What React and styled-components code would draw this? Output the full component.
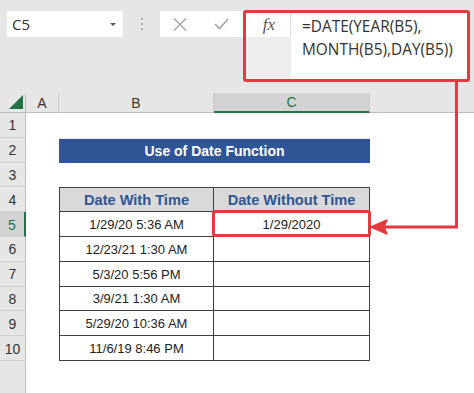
import styled, { createGlobalStyle } from "styled-components";

const GlobalStyle = createGlobalStyle`
  html, body {
    margin: 0;
    padding: 0;
    background: #e6e6e6;
  }
`;

const RED = "#e23b3f";
const GREEN = "#217346";
const BLUE = "#2f5597";

const rows = [
  { n: 1 },
  { n: 2, title: "Use of Date Function" },
  { n: 3 },
  { n: 4, head: ["Date With Time", "Date Without Time"] },
  { n: 5, data: ["1/29/20 5:36 AM", "1/29/2020"], active: true },
  { n: 6, data: ["12/23/21 1:30 AM", ""] },
  { n: 7, data: ["5/3/20 5:56 PM", ""] },
  { n: 8, data: ["3/9/21 1:30 AM", ""] },
  { n: 9, data: ["5/29/20 10:36 AM", ""] },
  { n: 10, data: ["11/6/19 8:46 PM", ""], last: true },
];

export default function App() {
  return (
    <>
      <GlobalStyle />
      <Page>
        <FormulaBar>
          <NameBox>
            <span>C5</span>
            <Caret />
          </NameBox>
          <Dots>
            <i />
            <i />
            <i />
          </Dots>
          <ButtonBox>
            <svg width="14" height="13" viewBox="0 0 14 13">
              <path d="M1 0.5 L13 12.5 M13 0.5 L1 12.5" stroke="#a3a3a3" strokeWidth="1.3" fill="none" />
            </svg>
            <svg width="15" height="12" viewBox="0 0 15 12">
              <path d="M1 6 L5.5 10.5 L14 1" stroke="#a3a3a3" strokeWidth="1.6" fill="none" />
            </svg>
          </ButtonBox>
          <FormulaFrame>
            <FxCell>
              <Fx>fx</Fx>
            </FxCell>
            <FormulaText>
              =DATE(YEAR(B5),
              <br />
              MONTH(B5),DAY(B5))
            </FormulaText>
          </FormulaFrame>
        </FormulaBar>

        <Grid>
          <Corner>
            <svg width="14" height="14" viewBox="0 0 14 14">
              <path d="M14 0 L14 14 L0 14 Z" fill={GREEN} />
            </svg>
          </Corner>
          <ColHead>A</ColHead>
          <ColHead>B</ColHead>
          <ColHead $active>C</ColHead>
          <ColHead $rest />

          {rows.map((r) => (
            <Row key={r.n} r={r} />
          ))}

          <RowHead $filler />
          <Blank style={{ gridColumn: "2 / 6" }} />
        </Grid>

        <Arrow width="474" height="393" viewBox="0 0 474 393">
          <path d="M456.5 82 L456.5 227 L384 227" stroke={RED} strokeWidth="3" fill="none" />
          <path d="M371 227 L387 220 L384 227 L387 234 Z" fill={RED} stroke={RED} strokeWidth="1.5" strokeLinejoin="round" />
        </Arrow>
      </Page>
    </>
  );
}

function Row({ r }) {
  let b = <Blank />;
  let c = <Blank />;

  if (r.title) {
    return (
      <>
        <RowHead>{r.n}</RowHead>
        <Blank />
        <Title>{r.title}</Title>
        <Blank />
      </>
    );
  }
  if (r.head) {
    b = <TableCell $head $first $top>{r.head[0]}</TableCell>;
    c = <TableCell $head $top>{r.head[1]}</TableCell>;
  }
  if (r.data) {
    b = <TableCell $first>{r.data[0]}</TableCell>;
    c = <TableCell $selected={r.active}>{r.data[1]}</TableCell>;
  }

  return (
    <>
      <RowHead $active={r.active}>{r.n}</RowHead>
      <Blank />
      {b}
      {c}
      <Blank />
    </>
  );
}

const Page = styled.div`
  position: relative;
  width: 474px;
  height: 393px;
  overflow: hidden;
  background: #e6e6e6;
  font-family: "Liberation Sans", Arial, sans-serif;
`;

const FormulaBar = styled.div`
  display: flex;
  align-items: flex-start;
  height: 93px;
  padding: 10px 0 0 7px;
  box-sizing: border-box;
`;

const NameBox = styled.div`
  display: flex;
  align-items: center;
  justify-content: space-between;
  width: 116px;
  height: 26px;
  margin-top: 1px;
  padding: 0 7px 0 5px;
  box-sizing: border-box;
  background: #fff;
  font-family: "Open Sans", sans-serif;
  font-size: 15px;
  color: #333;
`;

const Caret = styled.span`
  width: 0;
  height: 0;
  border-left: 3px solid transparent;
  border-right: 3px solid transparent;
  border-top: 3px solid #555;
`;

const Dots = styled.div`
  display: flex;
  flex-direction: column;
  align-items: center;
  gap: 3px;
  width: 37px;
  padding-top: 8px;

  i {
    width: 2px;
    height: 2px;
    background: #a8a8a8;
  }
`;

const ButtonBox = styled.div`
  display: flex;
  align-items: center;
  gap: 27px;
  width: 84px;
  height: 26px;
  margin-top: 1px;
  padding-left: 13px;
  box-sizing: border-box;
  background: #fff;
`;

const FormulaFrame = styled.div`
  display: flex;
  width: 227px;
  height: 72px;
  margin-left: -1px;
  box-sizing: border-box;
  border: 3px solid ${RED};
  border-radius: 3px;
  background: #ededed;
`;

const FxCell = styled.div`
  display: flex;
  justify-content: center;
  width: 44px;
  height: 24px;
  background: #fff;
  border-right: 1px solid #dcdcdc;
`;

const Fx = styled.span`
  font-family: "Liberation Serif", serif;
  font-style: italic;
  font-size: 17px;
  color: #555;
  line-height: 24px;
  margin-left: 2px;
`;

const FormulaText = styled.div`
  flex: 1;
  background: #fff;
  padding: 2px 0 0 11px;
  font-family: "Open Sans", sans-serif;
  font-size: 15.4px;
  line-height: 23px;
  color: #333;
  white-space: nowrap;
`;

const Grid = styled.div`
  display: grid;
  grid-template-columns: 26px 33px 155px 156px 1fr;
  grid-template-rows: 20px repeat(10, 24.8px) 1fr;
  height: 300px;
`;

const Corner = styled.div`
  display: flex;
  align-items: flex-end;
  justify-content: flex-end;
  padding: 0 2px 3px 0;
  border-right: 1px solid #bdbdbd;
  border-bottom: 1px solid #bdbdbd;
`;

const ColHead = styled.div`
  display: flex;
  align-items: center;
  justify-content: center;
  font-size: 14px;
  color: ${({ $active }) => ($active ? GREEN : "#333")};
  background: ${({ $active }) => ($active ? "#d3d3d3" : "#e6e6e6")};
  border-right: ${({ $rest }) => ($rest ? "none" : "1px solid #cacaca")};
  border-bottom: ${({ $active }) => ($active ? `2px solid ${GREEN}` : "1px solid #bdbdbd")};
  box-sizing: border-box;
`;

const RowHead = styled.div`
  display: flex;
  align-items: center;
  justify-content: center;
  font-size: 14px;
  padding-top: 1px;
  color: ${({ $active }) => ($active ? GREEN : "#333")};
  background: ${({ $active }) => ($active ? "#d3d3d3" : "#e6e6e6")};
  border-right: ${({ $active }) => ($active ? `2px solid ${GREEN}` : "1px solid #bdbdbd")};
  border-bottom: ${({ $filler }) => ($filler ? "none" : "1px solid #cfcfcf")};
  box-sizing: border-box;
`;

const Blank = styled.div`
  background: #fff;
`;

const Title = styled.div`
  grid-column: 3 / 5;
  display: flex;
  align-items: center;
  justify-content: center;
  margin-top: 1px;
  background: ${BLUE};
  color: #fff;
  font-weight: bold;
  font-size: 14px;
`;

const TableCell = styled.div`
  position: relative;
  display: flex;
  align-items: center;
  justify-content: center;
  box-sizing: border-box;
  background: ${({ $head }) => ($head ? "#d9d9d9" : "#fff")};
  color: ${({ $head }) => ($head ? BLUE : "#222")};
  font-weight: ${({ $head }) => ($head ? "bold" : "normal")};
  font-size: ${({ $head }) => ($head ? "14.6px" : "13px")};
  border-right: 1px solid #3f3f3f;
  border-bottom: 1px solid #3f3f3f;
  border-left: ${({ $first }) => ($first ? "1px solid #3f3f3f" : "none")};
  border-top: ${({ $top }) => ($top ? "1px solid #3f3f3f" : "none")};
  padding-top: 1px;

  ${({ $selected }) =>
    $selected &&
    `
    &::after {
      content: "";
      position: absolute;
      inset: -2px -2px -1px -2px;
      border: 3px solid ${RED};
      border-radius: 3px;
    }
  `}
`;

const Arrow = styled.svg`
  position: absolute;
  top: 0;
  left: 0;
  pointer-events: none;
`;
